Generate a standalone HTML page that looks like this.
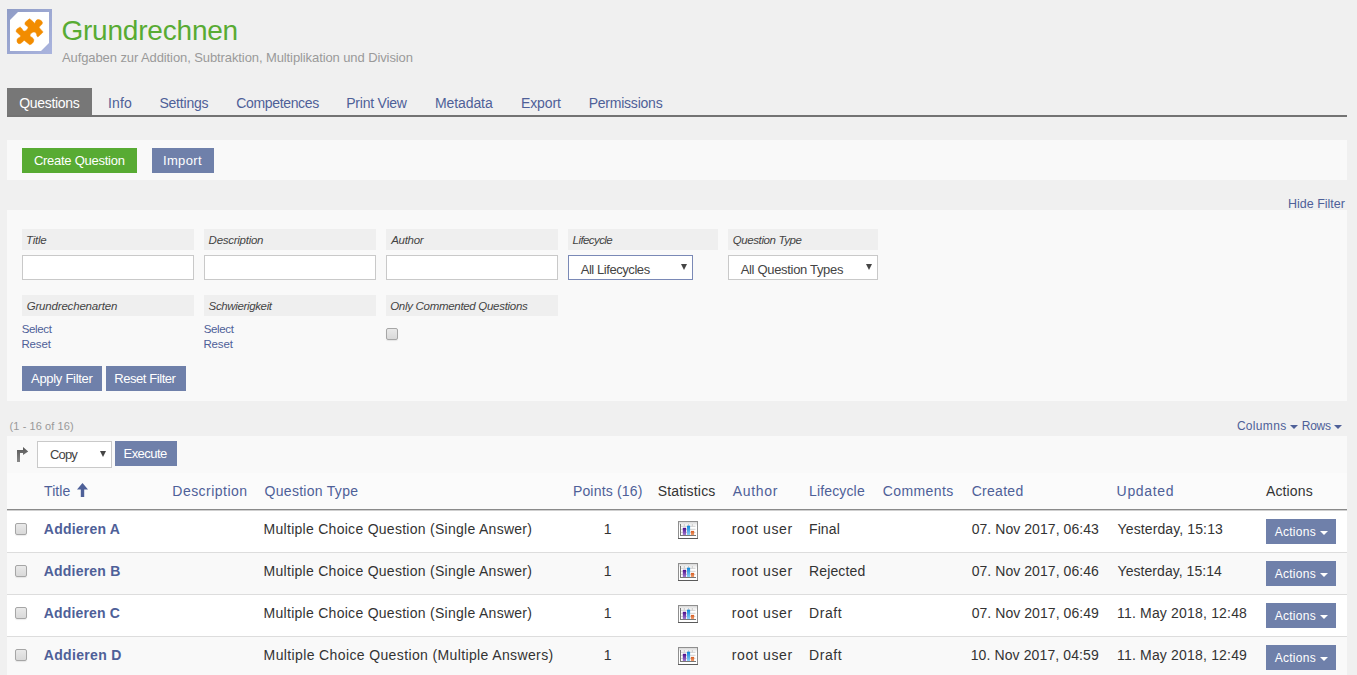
<!DOCTYPE html>
<html><head><meta charset="utf-8"><title>Grundrechnen</title>
<style>
html,body{margin:0;padding:0}
body{width:1357px;height:675px;overflow:hidden;background:#f0f0f0;position:relative;font-family:"Liberation Sans",sans-serif}
.t{position:absolute;white-space:pre;font-family:"Liberation Sans",sans-serif}
.b{position:absolute;box-sizing:border-box}
.btn{position:absolute;background:#6f80aa}
.lab{position:absolute;background:#efefef;height:21px;width:172px}
.inp{position:absolute;background:#fff;border:1px solid #c9c9c9;box-sizing:border-box;height:25px}
.cb{position:absolute;width:12px;height:12px;box-sizing:border-box;border:1px solid #a6a6a6;border-radius:2px;background:linear-gradient(#e9e9e9,#d9d9d9);box-shadow:0 1px 1px rgba(0,0,0,.08)}
.tri{position:absolute;width:0;height:0;border-left:3px solid transparent;border-right:3px solid transparent;border-top:6px solid #454545}
.caret{position:absolute;width:0;height:0;border-left:4px solid transparent;border-right:4px solid transparent;border-top:4px solid #fff}
.rowb{position:absolute;left:7px;width:1340px;height:1px;background:#dddddd}
</style></head><body>
<!-- header icon -->
<svg class="b" style="left:7px;top:9px" width="45" height="45" viewBox="0 0 45 45">
<defs><linearGradient id="g1" x1="0" y1="0" x2="1" y2="1"><stop offset="0" stop-color="#8f9cc6"/><stop offset="1" stop-color="#aab4de"/></linearGradient></defs>
<rect x="0" y="0" width="45" height="45" fill="url(#g1)"/>
<polygon points="11,3 42,3 42,34 34,42 3,42 3,11" fill="#fff"/>
<path fill="#f28c00" stroke="#f28c00" stroke-width="0.5" stroke-linejoin="round" d="M22.4 9.8 C24 10.5 25.5 12 27.9 14.6 C28.5 12 29.5 10.8 31 10.6 C33 10.5 35.3 12 35.5 13.8 C35.2 15.5 33.5 17 32 17.9 C32.3 18.8 33.5 20 35.7 22.4 C35.9 23.2 35.6 23.8 35.2 24.1 L30.9 27.9 C30 27.5 29.7 26.8 29.7 25.7 C29 23.5 27.5 23 26.7 23.1 C24.5 23.4 23.3 24.8 23.1 26.2 L23.1 27.2 C24.5 28 26 29 26.7 30.2 C27 31.5 26.6 32.5 26.2 33.2 C25.2 34.5 24 35.5 22.6 35.7 L17.1 31.2 C16.5 32 15.8 32.8 15.1 33.2 C14 34.3 13 34.7 12 34.7 C11 34.5 10.2 33.5 10 32.2 C9.9 31 10.2 30.3 10.5 29.7 C11.3 28.8 12.3 28.3 13.3 27.9 L13.6 26.7 L9 22.6 C9.2 21.5 9.5 20.8 10 20.1 L13.1 17.9 C14 18.5 14.6 19.3 15.1 20.1 C15.6 21 16 21.7 16.6 22.1 C18 22.3 19 21.8 19.6 21.1 C20.5 20.3 21 19.3 21.1 18.6 L21.1 18.1 C19.8 17.3 18.8 16.5 18.1 15.6 C17.8 14.8 17.9 13.8 18.4 13.1 Z"/>
</svg>
<!-- tabs -->
<div class="b" style="left:7px;top:88px;width:85px;height:28px;background:#777"></div>
<div class="b" style="left:7px;top:115px;width:1340px;height:2px;background:#737373"></div>
<!-- toolbar -->
<div class="b" style="left:7px;top:140px;width:1340px;height:40px;background:#f9f9f9"></div>
<div class="b" style="left:22px;top:148px;width:115px;height:25px;background:#58ab33"></div>
<div class="btn" style="left:152px;top:148px;width:62px;height:25px"></div>
<!-- filter panel -->
<div class="b" style="left:7px;top:210px;width:1340px;height:191px;background:#f9f9f9"></div>
<div class="lab" style="left:22px;top:229px"></div>
<div class="lab" style="left:204px;top:229px"></div>
<div class="lab" style="left:386px;top:229px"></div>
<div class="lab" style="left:568px;top:229px;width:150px"></div>
<div class="lab" style="left:728px;top:229px;width:150px"></div>
<div class="inp" style="left:22px;top:255px;width:172px"></div>
<div class="inp" style="left:204px;top:255px;width:172px"></div>
<div class="inp" style="left:386px;top:255px;width:172px"></div>
<div class="inp" style="left:568px;top:255px;width:125px;border-color:#7a89b6"></div>
<div class="inp" style="left:728px;top:255px;width:150px"></div>
<div class="tri" style="left:681px;top:264px"></div>
<div class="tri" style="left:866px;top:264px"></div>
<div class="lab" style="left:22px;top:295px"></div>
<div class="lab" style="left:204px;top:295px"></div>
<div class="lab" style="left:386px;top:295px"></div>
<div class="cb" style="left:386px;top:328px"></div>
<div class="btn" style="left:22px;top:366px;width:80px;height:25px"></div>
<div class="btn" style="left:106px;top:366px;width:80px;height:25px"></div>
<!-- table -->
<div class="tri" style="left:1290px;top:425px;border-top-color:#4e6098;border-left-width:4px;border-right-width:4px;border-top-width:4px"></div>
<div class="tri" style="left:1334px;top:425px;border-top-color:#4e6098;border-left-width:4px;border-right-width:4px;border-top-width:4px"></div>
<div class="b" style="left:7px;top:436px;width:1340px;height:239px;background:#f9f9f9"></div>
<div class="b" style="left:7px;top:473px;width:1340px;height:36px;background:#fbfbfb"></div>
<svg class="b" style="left:12px;top:442px" width="22" height="26" viewBox="0 0 22 26"><defs><linearGradient id="ga" x1="0" y1="0" x2="0" y2="1"><stop offset="0" stop-color="#555"/><stop offset="1" stop-color="#8a8a8a"/></linearGradient></defs><path d="M5 20 V8 H11 V5 L16.2 9.5 L11 13 V11 H8 V20 Z" fill="url(#ga)"/></svg>
<div class="inp" style="left:37px;top:441px;width:75px;height:27px"></div>
<div class="tri" style="left:100px;top:451px"></div>
<div class="btn" style="left:115px;top:441px;width:62px;height:25px"></div>
<svg class="b" style="left:77px;top:483px" width="11" height="14" viewBox="0 0 11 14"><path d="M5.5 0 L11 6.5 H7.2 V14 H3.8 V6.5 H0 Z" fill="#4e6098"/></svg>
<div class="b" style="left:7px;top:509px;width:1340px;height:1px;background:#8a8a8a"></div><div class="b" style="left:7px;top:510px;width:1340px;height:1px;background:#cfcfcf"></div>
<div class="b" style="left:7px;top:511px;width:1340px;height:41px;background:#fff"></div>
<div class="rowb" style="top:552px"></div>
<div class="b" style="left:7px;top:553px;width:1340px;height:41px;background:#f9f9f9"></div>
<div class="rowb" style="top:594px"></div>
<div class="b" style="left:7px;top:595px;width:1340px;height:41px;background:#fff"></div>
<div class="rowb" style="top:636px"></div>
<div class="b" style="left:7px;top:637px;width:1340px;height:41px;background:#f9f9f9"></div>
<!-- per-row widgets -->
<div class="cb" style="left:15px;top:523px"></div>
<div class="cb" style="left:15px;top:565px"></div>
<div class="cb" style="left:15px;top:607px"></div>
<div class="cb" style="left:15px;top:649px"></div>
<svg class="b" style="left:678px;top:521px" width="20" height="18" viewBox="0 0 20 18"><use href="#stat"/></svg>
<svg class="b" style="left:678px;top:563px" width="20" height="18" viewBox="0 0 20 18"><use href="#stat"/></svg>
<svg class="b" style="left:678px;top:605px" width="20" height="18" viewBox="0 0 20 18"><use href="#stat"/></svg>
<svg class="b" style="left:678px;top:647px" width="20" height="18" viewBox="0 0 20 18"><use href="#stat"/></svg>
<div class="btn" style="left:1266px;top:519px;width:70px;height:25px"></div>
<div class="btn" style="left:1266px;top:561px;width:70px;height:25px"></div>
<div class="btn" style="left:1266px;top:603px;width:70px;height:25px"></div>
<div class="btn" style="left:1266px;top:645px;width:70px;height:25px"></div>
<div class="caret" style="left:1320px;top:531px"></div>
<div class="caret" style="left:1320px;top:573px"></div>
<div class="caret" style="left:1320px;top:615px"></div>
<div class="caret" style="left:1320px;top:657px"></div>
<svg width="0" height="0" style="position:absolute"><defs>
<linearGradient id="gp" x1="0" y1="0" x2="0" y2="1"><stop offset="0" stop-color="#4a0a8a"/><stop offset="1" stop-color="#a07ad0"/></linearGradient>
<linearGradient id="gb" x1="0" y1="0" x2="0" y2="1"><stop offset="0" stop-color="#0a84d8"/><stop offset="1" stop-color="#8fd0f5"/></linearGradient>
<linearGradient id="go" x1="0" y1="0" x2="0" y2="1"><stop offset="0" stop-color="#d65a20"/><stop offset="1" stop-color="#f0a070"/></linearGradient>
<linearGradient id="gt" x1="0" y1="0" x2="0" y2="1"><stop offset="0" stop-color="#d8d8d8"/><stop offset="1" stop-color="#ffffff"/></linearGradient>
<g id="stat">
<rect x="0" y="0" width="20" height="18" fill="#8f8f8f"/>
<rect x="1" y="1" width="18" height="16" fill="#fff"/>
<rect x="1" y="1" width="18" height="4" fill="url(#gt)"/>
<rect x="0" y="17" width="20" height="1" fill="#5a5a5a"/>
<path d="M3 5.3 H17.5 M3 8.3 H17.5 M3 11.4 H17.5 M6.3 3 V5.3 M10.5 3 V5.3 M14.3 3 V5.3" stroke="#bbb" stroke-width="0.7"/>
<rect x="2" y="3" width="1" height="12" fill="#777"/>
<rect x="2" y="14" width="16" height="1" fill="#777"/>
<rect x="4.8" y="6.8" width="3.3" height="7.2" fill="url(#gp)"/>
<rect x="9" y="4.7" width="3.1" height="9.3" fill="url(#gb)"/>
<rect x="12.9" y="9.9" width="3.2" height="4.1" fill="url(#go)"/>
</g></defs></svg>
<span class="t" style="left:61.40px;top:17px;font-size:28px;font-weight:400;font-style:normal;line-height:28px;letter-spacing:-0.200px;color:#58ab33">Grundrechnen</span>
<span class="t" style="left:62.00px;top:51px;font-size:13px;font-weight:400;font-style:normal;line-height:13px;letter-spacing:-0.097px;color:#9a9a9a">Aufgaben zur Addition, Subtraktion, Multiplikation und Division</span>
<span class="t" style="left:19.20px;top:96px;font-size:14px;font-weight:400;font-style:normal;line-height:14px;letter-spacing:-0.312px;color:#ffffff">Questions</span>
<span class="t" style="left:107.90px;top:96px;font-size:14px;font-weight:400;font-style:normal;line-height:14px;letter-spacing:0.167px;color:#4e6098">Info</span>
<span class="t" style="left:159.40px;top:96px;font-size:14px;font-weight:400;font-style:normal;line-height:14px;letter-spacing:-0.200px;color:#4e6098">Settings</span>
<span class="t" style="left:236.30px;top:96px;font-size:14px;font-weight:400;font-style:normal;line-height:14px;letter-spacing:-0.350px;color:#4e6098">Competences</span>
<span class="t" style="left:346.20px;top:96px;font-size:14px;font-weight:400;font-style:normal;line-height:14px;letter-spacing:-0.222px;color:#4e6098">Print View</span>
<span class="t" style="left:435.00px;top:96px;font-size:14px;font-weight:400;font-style:normal;line-height:14px;letter-spacing:-0.100px;color:#4e6098">Metadata</span>
<span class="t" style="left:521.00px;top:96px;font-size:14px;font-weight:400;font-style:normal;line-height:14px;letter-spacing:-0.120px;color:#4e6098">Export</span>
<span class="t" style="left:588.70px;top:96px;font-size:14px;font-weight:400;font-style:normal;line-height:14px;letter-spacing:-0.230px;color:#4e6098">Permissions</span>
<span class="t" style="left:33.90px;top:154px;font-size:13px;font-weight:400;font-style:normal;line-height:13px;letter-spacing:-0.264px;color:#ffffff">Create Question</span>
<span class="t" style="left:163.00px;top:154px;font-size:13px;font-weight:400;font-style:normal;line-height:13px;letter-spacing:0.340px;color:#ffffff">Import</span>
<span class="t" style="left:1288.00px;top:198px;font-size:12.5px;font-weight:400;font-style:normal;line-height:12.5px;letter-spacing:0.000px;color:#4e6098">Hide Filter</span>
<span class="t" style="left:26.00px;top:235px;font-size:11.5px;font-weight:400;font-style:italic;line-height:11.5px;letter-spacing:-0.250px;color:#444444">Title</span>
<span class="t" style="left:208.60px;top:235px;font-size:11.5px;font-weight:400;font-style:italic;line-height:11.5px;letter-spacing:-0.260px;color:#444444">Description</span>
<span class="t" style="left:391.20px;top:235px;font-size:11.5px;font-weight:400;font-style:italic;line-height:11.5px;letter-spacing:-0.280px;color:#444444">Author</span>
<span class="t" style="left:572.60px;top:235px;font-size:11.5px;font-weight:400;font-style:italic;line-height:11.5px;letter-spacing:-0.575px;color:#444444">Lifecycle</span>
<span class="t" style="left:732.70px;top:235px;font-size:11.5px;font-weight:400;font-style:italic;line-height:11.5px;letter-spacing:-0.392px;color:#444444">Question Type</span>
<span class="t" style="left:26.70px;top:301px;font-size:11.5px;font-weight:400;font-style:italic;line-height:11.5px;letter-spacing:-0.180px;color:#444444">Grundrechenarten</span>
<span class="t" style="left:208.60px;top:301px;font-size:11.5px;font-weight:400;font-style:italic;line-height:11.5px;letter-spacing:-0.358px;color:#444444">Schwierigkeit</span>
<span class="t" style="left:390.20px;top:301px;font-size:11.5px;font-weight:400;font-style:italic;line-height:11.5px;letter-spacing:-0.300px;color:#444444">Only Commented Questions</span>
<span class="t" style="left:580.70px;top:263px;font-size:13px;font-weight:400;font-style:normal;line-height:13px;letter-spacing:-0.438px;color:#444444">All Lifecycles</span>
<span class="t" style="left:740.70px;top:263px;font-size:13px;font-weight:400;font-style:normal;line-height:13px;letter-spacing:-0.318px;color:#444444">All Question Types</span>
<span class="t" style="left:21.70px;top:324px;font-size:11.5px;font-weight:400;font-style:normal;line-height:11.5px;letter-spacing:-0.360px;color:#4e6098">Select</span>
<span class="t" style="left:21.40px;top:339px;font-size:11.5px;font-weight:400;font-style:normal;line-height:11.5px;letter-spacing:-0.150px;color:#4e6098">Reset</span>
<span class="t" style="left:203.70px;top:324px;font-size:11.5px;font-weight:400;font-style:normal;line-height:11.5px;letter-spacing:-0.360px;color:#4e6098">Select</span>
<span class="t" style="left:203.40px;top:339px;font-size:11.5px;font-weight:400;font-style:normal;line-height:11.5px;letter-spacing:-0.150px;color:#4e6098">Reset</span>
<span class="t" style="left:31.00px;top:372px;font-size:13px;font-weight:400;font-style:normal;line-height:13px;letter-spacing:-0.291px;color:#ffffff">Apply Filter</span>
<span class="t" style="left:114.20px;top:372px;font-size:13px;font-weight:400;font-style:normal;line-height:13px;letter-spacing:-0.427px;color:#ffffff">Reset Filter</span>
<span class="t" style="left:9.60px;top:421px;font-size:11px;font-weight:400;font-style:normal;line-height:11px;letter-spacing:0.085px;color:#999999">(1 - 16 of 16)</span>
<span class="t" style="left:1236.90px;top:420px;font-size:12px;font-weight:400;font-style:normal;line-height:12px;letter-spacing:0.317px;color:#4e6098">Columns</span>
<span class="t" style="left:1301.80px;top:420px;font-size:12px;font-weight:400;font-style:normal;line-height:12px;letter-spacing:-0.267px;color:#4e6098">Rows</span>
<span class="t" style="left:50.00px;top:448px;font-size:13px;font-weight:400;font-style:normal;line-height:13px;letter-spacing:-0.867px;color:#444444">Copy</span>
<span class="t" style="left:123.50px;top:447px;font-size:13px;font-weight:400;font-style:normal;line-height:13px;letter-spacing:-0.533px;color:#ffffff">Execute</span>
<span class="t" style="left:44.00px;top:484px;font-size:14px;font-weight:400;font-style:normal;line-height:14px;letter-spacing:0.100px;color:#4e6098">Title</span>
<span class="t" style="left:172.30px;top:484px;font-size:14px;font-weight:400;font-style:normal;line-height:14px;letter-spacing:0.470px;color:#4e6098">Description</span>
<span class="t" style="left:264.60px;top:484px;font-size:14px;font-weight:400;font-style:normal;line-height:14px;letter-spacing:0.283px;color:#4e6098">Question Type</span>
<span class="t" style="left:572.90px;top:484px;font-size:14px;font-weight:400;font-style:normal;line-height:14px;letter-spacing:0.180px;color:#4e6098">Points (16)</span>
<span class="t" style="left:657.70px;top:484px;font-size:14px;font-weight:400;font-style:normal;line-height:14px;letter-spacing:0.178px;color:#333333">Statistics</span>
<span class="t" style="left:732.70px;top:484px;font-size:14px;font-weight:400;font-style:normal;line-height:14px;letter-spacing:0.700px;color:#4e6098">Author</span>
<span class="t" style="left:809.00px;top:484px;font-size:14px;font-weight:400;font-style:normal;line-height:14px;letter-spacing:0.150px;color:#4e6098">Lifecycle</span>
<span class="t" style="left:882.80px;top:484px;font-size:14px;font-weight:400;font-style:normal;line-height:14px;letter-spacing:0.386px;color:#4e6098">Comments</span>
<span class="t" style="left:971.70px;top:484px;font-size:14px;font-weight:400;font-style:normal;line-height:14px;letter-spacing:0.283px;color:#4e6098">Created</span>
<span class="t" style="left:1116.60px;top:484px;font-size:14px;font-weight:400;font-style:normal;line-height:14px;letter-spacing:0.683px;color:#4e6098">Updated</span>
<span class="t" style="left:1265.90px;top:484px;font-size:14px;font-weight:400;font-style:normal;line-height:14px;letter-spacing:0.150px;color:#333333">Actions</span>
<span class="t" style="left:43.80px;top:522px;font-size:14px;font-weight:700;font-style:normal;line-height:14px;letter-spacing:0.222px;color:#4e6098">Addieren A</span>
<span class="t" style="left:263.60px;top:522px;font-size:14px;font-weight:400;font-style:normal;line-height:14px;letter-spacing:0.277px;color:#333333">Multiple Choice Question (Single Answer)</span>
<span class="t" style="left:603.80px;top:522px;font-size:14px;font-weight:400;font-style:normal;line-height:14px;letter-spacing:-1.800px;color:#333333">1</span>
<span class="t" style="left:731.70px;top:522px;font-size:14px;font-weight:400;font-style:normal;line-height:14px;letter-spacing:0.662px;color:#333333">root user</span>
<span class="t" style="left:809.00px;top:522px;font-size:14px;font-weight:400;font-style:normal;line-height:14px;letter-spacing:0.100px;color:#333333">Final</span>
<span class="t" style="left:971.70px;top:522px;font-size:14px;font-weight:400;font-style:normal;line-height:14px;letter-spacing:0.056px;color:#333333">07. Nov 2017, 06:43</span>
<span class="t" style="left:1117.60px;top:522px;font-size:14px;font-weight:400;font-style:normal;line-height:14px;letter-spacing:0.113px;color:#333333">Yesterday, 15:13</span>
<span class="t" style="left:1274.70px;top:526px;font-size:12px;font-weight:400;font-style:normal;line-height:12px;letter-spacing:0.267px;color:#ffffff">Actions</span>
<span class="t" style="left:43.80px;top:564px;font-size:14px;font-weight:700;font-style:normal;line-height:14px;letter-spacing:0.200px;color:#4e6098">Addieren B</span>
<span class="t" style="left:263.60px;top:564px;font-size:14px;font-weight:400;font-style:normal;line-height:14px;letter-spacing:0.277px;color:#333333">Multiple Choice Question (Single Answer)</span>
<span class="t" style="left:603.80px;top:564px;font-size:14px;font-weight:400;font-style:normal;line-height:14px;letter-spacing:-1.800px;color:#333333">1</span>
<span class="t" style="left:731.70px;top:564px;font-size:14px;font-weight:400;font-style:normal;line-height:14px;letter-spacing:0.662px;color:#333333">root user</span>
<span class="t" style="left:809.00px;top:564px;font-size:14px;font-weight:400;font-style:normal;line-height:14px;letter-spacing:0.143px;color:#333333">Rejected</span>
<span class="t" style="left:971.70px;top:564px;font-size:14px;font-weight:400;font-style:normal;line-height:14px;letter-spacing:0.056px;color:#333333">07. Nov 2017, 06:46</span>
<span class="t" style="left:1117.60px;top:564px;font-size:14px;font-weight:400;font-style:normal;line-height:14px;letter-spacing:0.047px;color:#333333">Yesterday, 15:14</span>
<span class="t" style="left:1274.70px;top:568px;font-size:12px;font-weight:400;font-style:normal;line-height:12px;letter-spacing:0.267px;color:#ffffff">Actions</span>
<span class="t" style="left:43.80px;top:606px;font-size:14px;font-weight:700;font-style:normal;line-height:14px;letter-spacing:0.144px;color:#4e6098">Addieren C</span>
<span class="t" style="left:263.60px;top:606px;font-size:14px;font-weight:400;font-style:normal;line-height:14px;letter-spacing:0.277px;color:#333333">Multiple Choice Question (Single Answer)</span>
<span class="t" style="left:603.80px;top:606px;font-size:14px;font-weight:400;font-style:normal;line-height:14px;letter-spacing:-1.800px;color:#333333">1</span>
<span class="t" style="left:731.70px;top:606px;font-size:14px;font-weight:400;font-style:normal;line-height:14px;letter-spacing:0.662px;color:#333333">root user</span>
<span class="t" style="left:809.00px;top:606px;font-size:14px;font-weight:400;font-style:normal;line-height:14px;letter-spacing:0.575px;color:#333333">Draft</span>
<span class="t" style="left:971.70px;top:606px;font-size:14px;font-weight:400;font-style:normal;line-height:14px;letter-spacing:0.056px;color:#333333">07. Nov 2017, 06:49</span>
<span class="t" style="left:1117.00px;top:606px;font-size:14px;font-weight:400;font-style:normal;line-height:14px;letter-spacing:0.183px;color:#333333">11. May 2018, 12:48</span>
<span class="t" style="left:1274.70px;top:610px;font-size:12px;font-weight:400;font-style:normal;line-height:12px;letter-spacing:0.267px;color:#ffffff">Actions</span>
<span class="t" style="left:43.80px;top:648px;font-size:14px;font-weight:700;font-style:normal;line-height:14px;letter-spacing:0.322px;color:#4e6098">Addieren D</span>
<span class="t" style="left:263.60px;top:648px;font-size:14px;font-weight:400;font-style:normal;line-height:14px;letter-spacing:0.374px;color:#333333">Multiple Choice Question (Multiple Answers)</span>
<span class="t" style="left:603.80px;top:648px;font-size:14px;font-weight:400;font-style:normal;line-height:14px;letter-spacing:-1.800px;color:#333333">1</span>
<span class="t" style="left:731.70px;top:648px;font-size:14px;font-weight:400;font-style:normal;line-height:14px;letter-spacing:0.662px;color:#333333">root user</span>
<span class="t" style="left:809.00px;top:648px;font-size:14px;font-weight:400;font-style:normal;line-height:14px;letter-spacing:0.575px;color:#333333">Draft</span>
<span class="t" style="left:970.70px;top:648px;font-size:14px;font-weight:400;font-style:normal;line-height:14px;letter-spacing:0.111px;color:#333333">10. Nov 2017, 04:59</span>
<span class="t" style="left:1117.00px;top:648px;font-size:14px;font-weight:400;font-style:normal;line-height:14px;letter-spacing:0.183px;color:#333333">11. May 2018, 12:49</span>
<span class="t" style="left:1274.70px;top:652px;font-size:12px;font-weight:400;font-style:normal;line-height:12px;letter-spacing:0.267px;color:#ffffff">Actions</span>
</body></html>
